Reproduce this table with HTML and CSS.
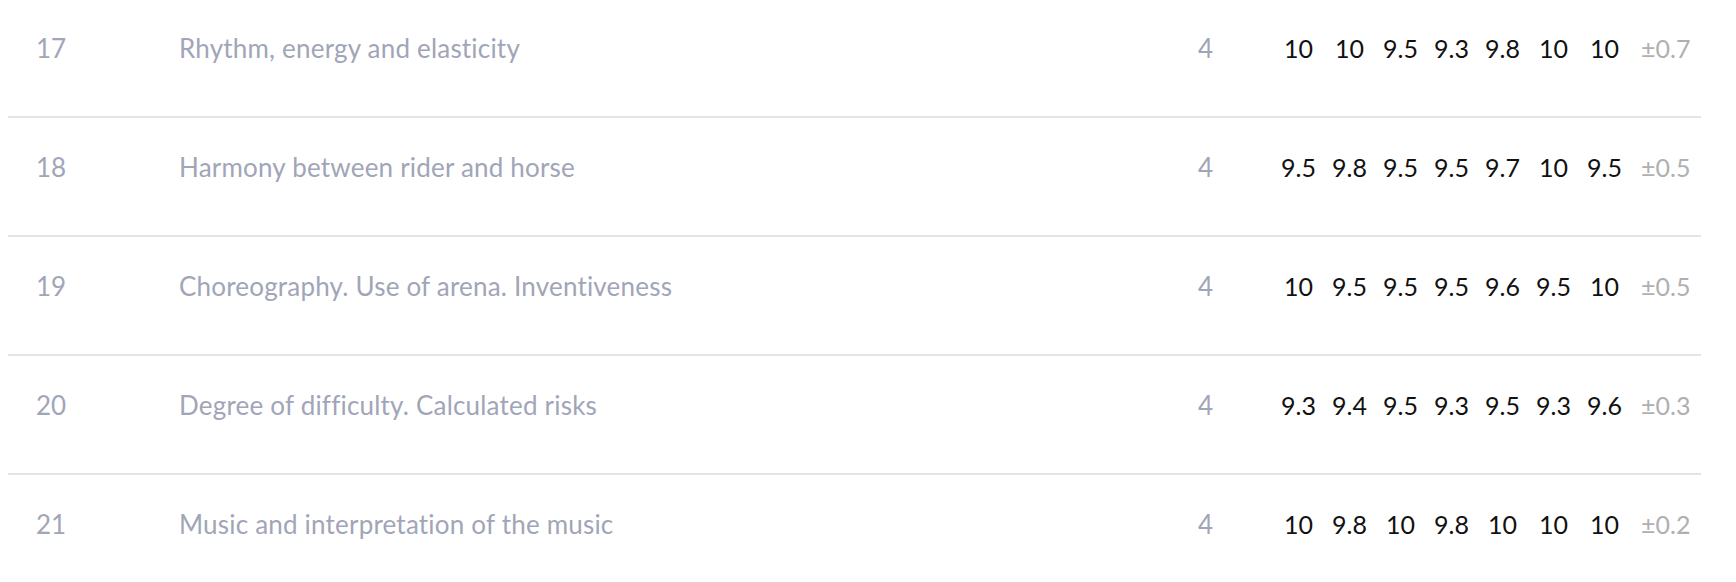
FILE: index.html
```html
<!DOCTYPE html>
<html>
<head>
<meta charset="utf-8">
<link rel="stylesheet" href="styles.css">
</head>
<body>
<div class="table">
  <div class="row">
    <div class="num">17</div><div class="desc">Rhythm, energy and elasticity</div><div class="coef">4</div>
    <div class="s">10</div><div class="s">10</div><div class="s">9.5</div><div class="s">9.3</div><div class="s">9.8</div><div class="s">10</div><div class="s">10</div>
    <div class="dev">±0.7</div>
  </div>
  <div class="row">
    <div class="num">18</div><div class="desc">Harmony between rider and horse</div><div class="coef">4</div>
    <div class="s">9.5</div><div class="s">9.8</div><div class="s">9.5</div><div class="s">9.5</div><div class="s">9.7</div><div class="s">10</div><div class="s">9.5</div>
    <div class="dev">±0.5</div>
  </div>
  <div class="row">
    <div class="num">19</div><div class="desc">Choreography. Use of arena. Inventiveness</div><div class="coef">4</div>
    <div class="s">10</div><div class="s">9.5</div><div class="s">9.5</div><div class="s">9.5</div><div class="s">9.6</div><div class="s">9.5</div><div class="s">10</div>
    <div class="dev">±0.5</div>
  </div>
  <div class="row">
    <div class="num">20</div><div class="desc">Degree of difficulty. Calculated risks</div><div class="coef">4</div>
    <div class="s">9.3</div><div class="s">9.4</div><div class="s">9.5</div><div class="s">9.3</div><div class="s">9.5</div><div class="s">9.3</div><div class="s">9.6</div>
    <div class="dev">±0.3</div>
  </div>
  <div class="row">
    <div class="num">21</div><div class="desc">Music and interpretation of the music</div><div class="coef">4</div>
    <div class="s">10</div><div class="s">9.8</div><div class="s">10</div><div class="s">9.8</div><div class="s">10</div><div class="s">10</div><div class="s">10</div>
    <div class="dev">±0.2</div>
  </div>
</div>
</body>
</html>
```
FILE: styles.css
```css
body {
  margin: 0 8px;
  background: #fff;
  font-family: "Lato", sans-serif;
}
.table {
  width: 1693px;
  margin-top: -1px;
}
.row {
  display: grid;
  grid-template-columns: 171px 1019px 75px repeat(7, 51px) 1fr;
  align-items: start;
  box-sizing: content-box;
  height: 84px;
  padding-top: 33px;
  border-bottom: 2px solid #e1e4e9;
  font-size: 26px;
  line-height: 32px;
}
.num { padding-left: 28px; color: #a1a5b8; }
.desc { color: #a1a5b8; letter-spacing: 0.2px; }
.coef { color: #a1a5b8; }
.s { text-align: center; color: #111; white-space: nowrap; font-size: 25px; }
.dev { padding: 0 12px 0 11px; color: #b0b0b0; white-space: nowrap; font-size: 25px; }
```
